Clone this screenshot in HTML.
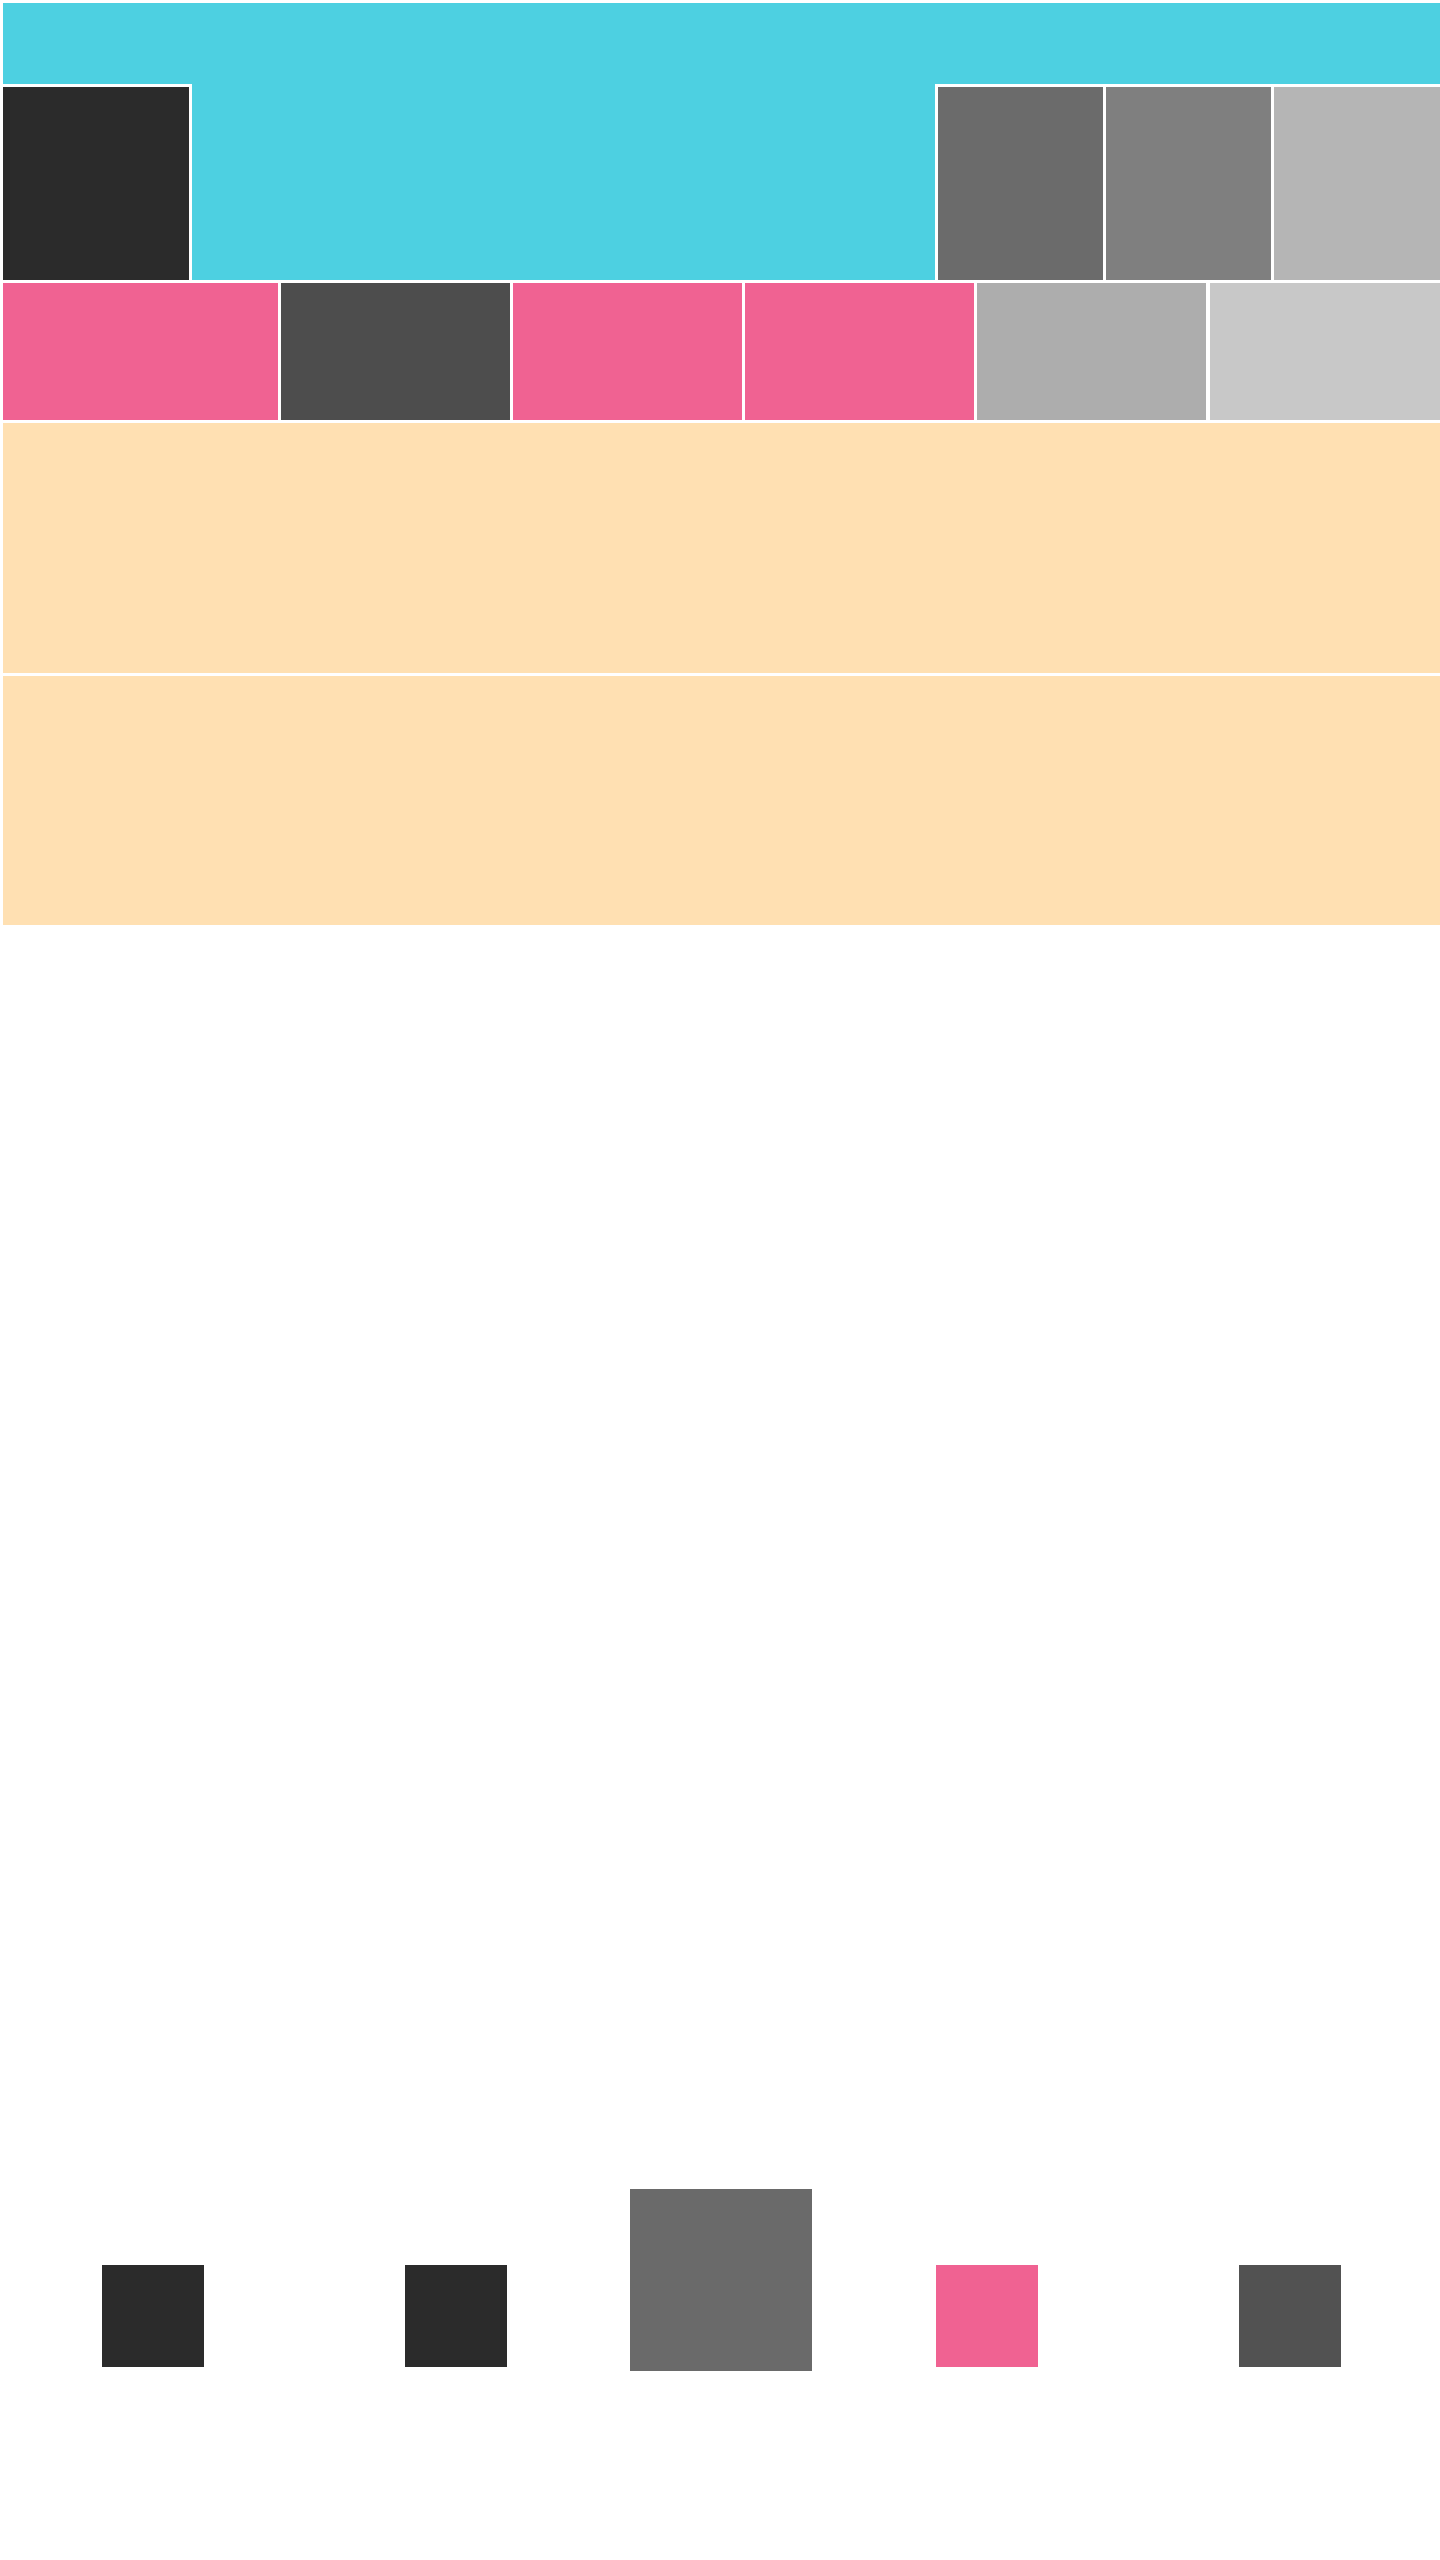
<!DOCTYPE html>
<html><head><style>
html,body{margin:0;padding:0;background:#fff;width:1440px;height:2560px;position:relative;overflow:hidden}
div{position:absolute}
</style></head><body>
<div style="left:3px;top:3px;width:1437px;height:81px;background:#4dd0e1"></div>
<div style="left:192px;top:84px;width:743px;height:196px;background:#4dd0e1"></div>
<div style="left:3px;top:87px;width:186px;height:193px;background:#2b2b2b"></div>
<div style="left:938px;top:87px;width:165px;height:193px;background:#6b6b6b"></div>
<div style="left:1106px;top:87px;width:165px;height:193px;background:#7f7f7f"></div>
<div style="left:1274px;top:87px;width:166px;height:193px;background:#b5b5b5"></div>
<div style="left:3px;top:283px;width:275px;height:137px;background:#f06292"></div>
<div style="left:281px;top:283px;width:229px;height:137px;background:#4d4d4d"></div>
<div style="left:513px;top:283px;width:229px;height:137px;background:#f06292"></div>
<div style="left:745px;top:283px;width:229px;height:137px;background:#f06292"></div>
<div style="left:977px;top:283px;width:229px;height:137px;background:#adadad"></div>
<div style="left:1210px;top:283px;width:230px;height:137px;background:#c8c8c8"></div>
<div style="left:3px;top:423px;width:1437px;height:250px;background:#ffe0b2"></div>
<div style="left:3px;top:676px;width:1437px;height:249px;background:#ffe0b2"></div>
<div style="left:102px;top:2265px;width:102px;height:102px;background:#2b2b2b"></div>
<div style="left:405px;top:2265px;width:102px;height:102px;background:#2b2b2b"></div>
<div style="left:630px;top:2189px;width:182px;height:182px;background:#6a6a6a"></div>
<div style="left:936px;top:2265px;width:102px;height:102px;background:#f06292"></div>
<div style="left:1239px;top:2265px;width:102px;height:102px;background:#525252"></div>
</body></html>
